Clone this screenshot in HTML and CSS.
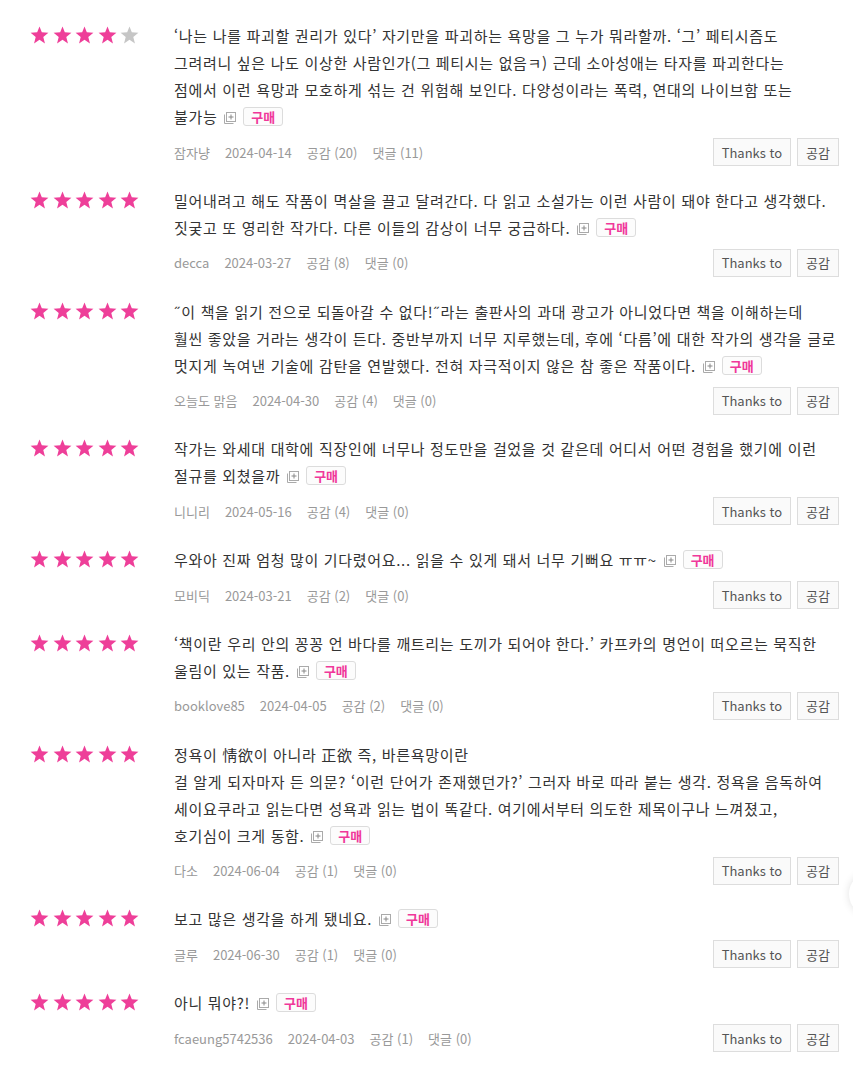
FILE: index.html
```html
<!DOCTYPE html>
<html lang="ko">
<head>
<meta charset="utf-8">
<link rel="stylesheet" href="styles.css">
</head>
<body>
<svg width="0" height="0" class="defs" aria-hidden="true">
  <defs>
    <symbol id="star" viewBox="0 0 20 19">
      <path d="M10 0.6 L12.45 6.6 L19.4 7.1 L14 11.5 L15.75 18.4 L10 14.6 L4.25 18.4 L6 11.5 L0.6 7.1 L7.55 6.6 Z"/>
    </symbol>
    <symbol id="more" viewBox="0 0 12 12">
      <path d="M0.5 2.5 V11.5 H9.5" fill="none" stroke="#aaa" stroke-width="1"/>
      <rect x="2.5" y="0.5" width="9" height="9" fill="#fff" stroke="#aaa" stroke-width="1"/>
      <path d="M7 2.5 V7.5 M4.5 5 H9.5" stroke="#888" stroke-width="1"/>
    </symbol>
  </defs>
</svg>
<ul class="reviews" id="list"></ul>
<div class="float-edge" aria-hidden="true"></div>
<script src="app.js"></script>
</body>
</html>
```
FILE: app.js
```js
const data = [
  {r:4, t:"‘나는 나를 파괴할 권리가 있다’ 자기만을 파괴하는 욕망을 그 누가 뭐라할까. ‘그’ 페티시즘도 그려려니 싶은 나도 이상한 사람인가(그 페티시는 없음ㅋ) 근데 소아성애는 타자를 파괴한다는\n점에서 이런 욕망과 모호하게 섞는 건 위험해 보인다. 다양성이라는 폭력, 연대의 나이브함 또는 불가능", u:"잠자냥", d:"2024-04-14", l:20, c:11},
  {r:5, t:"밀어내려고 해도 작품이 멱살을 끌고 달려간다. 다 읽고 소설가는 이런 사람이 돼야 한다고 생각했다. 짓궂고 또 영리한 작가다. 다른 이들의 감상이 너무 궁금하다.", u:"decca", d:"2024-03-27", l:8, c:0},
  {r:5, t:"˝이 책을 읽기 전으로 되돌아갈 수 없다!˝라는 출판사의 과대 광고가 아니었다면 책을 이해하는데\n훨씬 좋았을 거라는 생각이 든다. 중반부까지 너무 지루했는데, 후에 ‘다름’에 대한 작가의 생각을 글로 멋지게 녹여낸 기술에 감탄을 연발했다. 전혀 자극적이지 않은 참 좋은 작품이다.", u:"오늘도 맑음", d:"2024-04-30", l:4, c:0},
  {r:5, t:"작가는 와세대 대학에 직장인에 너무나 정도만을 걸었을 것 같은데 어디서 어떤 경험을 했기에 이런 절규를 외쳤을까", u:"니니리", d:"2024-05-16", l:4, c:0},
  {r:5, t:"우와아 진짜 엄청 많이 기다렸어요... 읽을 수 있게 돼서 너무 기뻐요 ㅠㅠ~", u:"모비딕", d:"2024-03-21", l:2, c:0},
  {r:5, t:"‘책이란 우리 안의 꽁꽁 언 바다를 깨트리는 도끼가 되어야 한다.’ 카프카의 명언이 떠오르는 묵직한 울림이 있는 작품.", u:"booklove85", d:"2024-04-05", l:2, c:0},
  {r:5, t:"정욕이 情欲이 아니라 正欲 즉, 바른욕망이란\n걸 알게 되자마자 든 의문? ‘이런 단어가 존재했던가?’ 그러자 바로 따라 붙는 생각. 정욕을 음독하여 세이요쿠라고 읽는다면 성욕과 읽는 법이 똑같다. 여기에서부터 의도한 제목이구나 느껴졌고, 호기심이 크게 동함.", u:"다소", d:"2024-06-04", l:1, c:0},
  {r:5, t:"보고 많은 생각을 하게 됐네요.", u:"글루", d:"2024-06-30", l:1, c:0},
  {r:5, t:"아니 뭐야?!", u:"fcaeung5742536", d:"2024-04-03", l:1, c:0}
];
const list = document.getElementById('list');
for (const it of data) {
  const li = document.createElement('li');
  li.className = 'review';
  let stars = '';
  for (let i = 0; i < 5; i++) {
    stars += `<svg class="star ${i < it.r ? 'on' : 'off'}"><use href="#star"/></svg>`;
  }
  const text = it.t.replace(/&/g,'&amp;').replace(/</g,'&lt;').replace(/\n/g,'<br>');
  li.innerHTML = `
    <div class="stars">${stars}</div>
    <div class="body">
      <p class="text">${text} <span class="tail"><svg class="more"><use href="#more"/></svg><button class="buy">구매</button></span></p>
      <div class="meta">
        <span class="user">${it.u}</span>
        <span>${it.d}</span>
        <span>공감 (${it.l})</span>
        <span>댓글 (${it.c})</span>
        <span class="btns"><button class="act">Thanks to</button><button class="act">공감</button></span>
      </div>
    </div>`;
  list.appendChild(li);
}
```
FILE: styles.css
```css
* { box-sizing: border-box; }
html, body { margin: 0; padding: 0; background: #fff; }
body {
  font-family: "Malgun Gothic", "Noto Sans CJK KR", "Noto Sans", sans-serif;
  color: #333;
  overflow: hidden;
}
.defs { position: absolute; width: 0; height: 0; }
.reviews {
  list-style: none;
  margin: 0;
  padding: 22px 14px 0 30px;
}
.review {
  display: flex;
  padding-bottom: 20.75px;
}
.stars {
  width: 144px;
  flex: none;
  display: flex;
  gap: 3.5px;
  padding-top: 4px;
  align-self: flex-start;
}
.star { width: 19px; height: 18px; }
.star.on { fill: #ee3f99; }
.star.off { fill: #c6c6c6; }
.body { flex: 1; min-width: 0; }
.text {
  margin: 0;
  font-size: 15px;
  line-height: 27px;
  color: #333;
  letter-spacing: 0.68px;
  word-break: keep-all;
}
.tail { white-space: nowrap; letter-spacing: 0; }
.more {
  width: 12px;
  height: 12px;
  vertical-align: -1px;
  margin: 0 7px 0 2px;
}
.buy {
  font-family: inherit;
  font-size: 13px;
  font-weight: bold;
  color: #f0389a;
  background: #fcfcfc;
  border: 1px solid #dcdcdc;
  border-radius: 3px;
  height: 19px;
  padding: 0 7px;
  line-height: 17px;
  vertical-align: 1px;
}
.meta {
  display: flex;
  align-items: center;
  gap: 15px;
  margin-top: 8px;
  font-size: 13px;
  color: #999;
  height: 28px;
}
.btns { margin-left: auto; display: flex; gap: 6px; }
.act {
  font-family: inherit;
  font-size: 13px;
  color: #555;
  background: #fafafa;
  border: 1px solid #ddd;
  height: 28px;
  padding: 0 8px;
}
.float-edge {
  position: fixed;
  top: 872px;
  right: -40px;
  width: 44px;
  height: 44px;
  border-radius: 50%;
  background: #fff;
  box-shadow: 0 0 8px rgba(0, 0, 0, 0.12);
}
```
